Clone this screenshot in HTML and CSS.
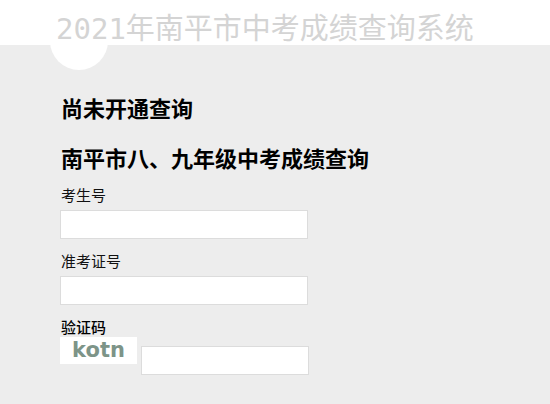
FILE: index.html
```html
<!DOCTYPE html>
<html>

<head>
    <title>2021年南平市中考成绩查询系统</title>
    <meta charset="utf-8">
    <link rel="stylesheet" href="styles.css">
</head>

<body>
    <header class="top">
        <div class="logo"></div>
        <h1 class="titel">2021年南平市中考成绩查询系统</h1>
    </header>

    <section class="indhold">
        <h2 class="status">尚未开通查询</h2>
        <h2 class="overskrift">南平市八、九年级中考成绩查询</h2>

        <form class="formular">
            <label class="felt">
                <span>考生号</span>
                <input type="text">
            </label>
            <label class="felt">
                <span>准考证号</span>
                <input type="text">
            </label>
            <div class="felt kode">
                <span>验证码</span>
                <div class="kode-raekke">
                    <div class="captcha">kotn</div>
                    <input type="text">
                </div>
            </div>
        </form>
    </section>
</body>

</html>
```

FILE: styles.css
```css
body {
    margin: 0;
    background-color: #ededed;
    font-family: "Noto Sans CJK SC", sans-serif;
    color: #111;
}

.top {
    position: relative;
    height: 45px;
    background-color: white;
}

.logo {
    position: absolute;
    left: 50px;
    top: 12px;
    width: 58px;
    height: 58px;
    border-radius: 50%;
    background-color: white;
}

.titel {
    position: relative;
    margin: 0;
    padding-left: 56px;
    font-family: "DejaVu Sans Mono", "Noto Sans CJK SC", monospace;
    font-weight: normal;
    font-size: 29px;
    line-height: 58px;
    height: 45px;
    overflow: hidden;
    color: #d4d4d4;
    white-space: nowrap;
}

.indhold {
    padding: 47px 0 0 61px;
}

h2 {
    margin: 0;
    font-size: 22px;
    font-weight: bold;
    line-height: 30px;
    color: #000;
}

.overskrift {
    margin-top: 20px;
}

.formular {
    margin-top: 12px;
}

.felt {
    display: flex;
    flex-direction: column;
    align-items: flex-start;
    margin-bottom: 11px;
    font-size: 15px;
    line-height: 22px;
}

.felt span {
    margin-bottom: 4px;
}

.felt input {
    box-sizing: border-box;
    width: 248px;
    height: 29px;
    margin: 0;
    border: 1px solid #dcdcdc;
    background: white;
    margin-left: -1px;
}

.kode span {
    color: #000;
    font-weight: 500;
    margin-bottom: 0;
    line-height: 21px;
}

.kode-raekke {
    display: flex;
    align-items: flex-start;
    gap: 4px;
    margin-left: -1px;
}

.kode-raekke input {
    width: 168px;
    margin: 9px 0 0 0;
}

.captcha {
    width: 77px;
    height: 27px;
    background: white;
    color: #7d9488;
    font-family: "DejaVu Sans", sans-serif;
    font-weight: bold;
    font-size: 21px;
    line-height: 26px;
    text-align: center;
}
```
